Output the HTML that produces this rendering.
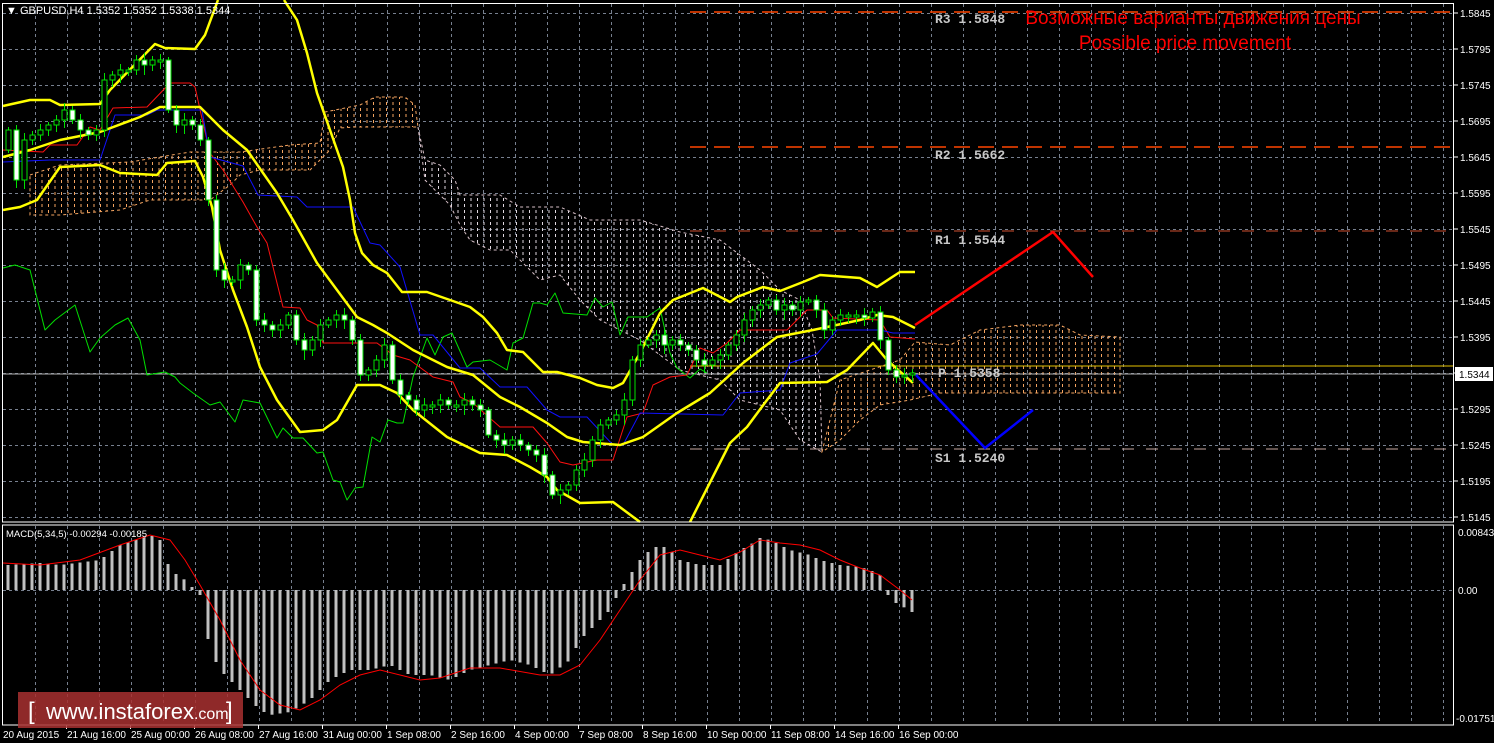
<!DOCTYPE html>
<html><head><meta charset="utf-8"><style>
html,body{margin:0;padding:0;background:#000;width:1494px;height:743px;overflow:hidden}
svg{display:block}
text{font-family:"Liberation Sans",sans-serif}
text.mono{font-family:"Liberation Mono",monospace;font-weight:bold;font-size:13px;fill:#c8c8c8}
</style></head><body>
<svg id="s" width="1494" height="743" viewBox="0 0 1494 743" xmlns="http://www.w3.org/2000/svg">
<defs>
<pattern id="po" width="6.5" height="6" patternUnits="userSpaceOnUse"><line x1="3" y1="0" x2="3" y2="3" stroke="#f4a460" stroke-width="1"/></pattern>
<pattern id="pw" width="6.5" height="6" patternUnits="userSpaceOnUse"><line x1="3" y1="0" x2="3" y2="3" stroke="#e0d8e0" stroke-width="1"/></pattern>
</defs>
<rect width="1494" height="743" fill="#000"/>
<g id="grid" stroke="#77808f" stroke-width="1" stroke-dasharray="3,3"></g>
<polygon fill="url(#po)" stroke="#f4a460" stroke-dasharray="3,3" stroke-width="1" points="30,175 60,165 130,162 190,152 240,152 290,145 320,143 325,112 360,105 375,97 405,97 415,105 418,127 380,127 355,127 340,128 330,150 310,170 260,170 240,175 230,185 210,200 180,200 150,200 120,210 60,215 30,215"/>
<polygon fill="url(#pw)" stroke="#d8c0c8" stroke-dasharray="3,3" stroke-width="1" points="418,127 425,160 440,165 455,180 460,195 500,195 520,207 560,207 590,220 640,220 680,232 720,240 760,270 780,290 800,300 812,330 820,380 822,452 800,440 780,410 740,400 720,380 680,370 640,340 600,320 580,300 560,275 540,280 510,250 490,250 470,240 460,225 450,205 425,180"/>
<polygon fill="url(#po)" stroke="#f4a460" stroke-dasharray="3,3" stroke-width="1" points="822,452 840,380 870,370 900,360 915,342 950,345 980,330 1020,325 1060,325 1080,335 1120,337 1120,393 1020,393 940,393 910,400 880,405 860,420 840,440"/>
<line x1="690" y1="12" x2="1452" y2="12" stroke="#ff4500" stroke-width="1.5" stroke-dasharray="16,8"/>
<line x1="690" y1="147" x2="1452" y2="147" stroke="#ff4500" stroke-width="1.5" stroke-dasharray="16,8"/>
<line x1="690" y1="231" x2="1452" y2="231" stroke="#d05030" stroke-width="1" stroke-dasharray="12,12"/>
<line x1="690" y1="449" x2="1452" y2="449" stroke="#c8a8a0" stroke-width="1" stroke-dasharray="12,12"/>
<line x1="690" y1="366" x2="1454" y2="366" stroke="#e6c200" stroke-width="1"/>
<line x1="3" y1="374" x2="1454" y2="374" stroke="#b0b0b0" stroke-width="1"/>
<text class="mono" x="935" y="23">R3 1.5848</text>
<text class="mono" x="935" y="159">R2 1.5662</text>
<text class="mono" x="935" y="244">R1 1.5544</text>
<text class="mono" x="938" y="377">P 1.5358</text>
<text class="mono" x="935" y="462">S1 1.5240</text>
<g fill="none" stroke-linejoin="round">
<polyline stroke="#00e000" stroke-width="1" points="3,268 15,265 30,270 45,330 55,320 75,305 90,352 100,338 115,325 128,318 140,340 147,375 165,372 175,377 180,383 193,393 210,405 220,402 235,422 243,400 260,403 277,438 283,428 293,438 303,438 317,453 323,452 333,480 340,482 347,500 355,488 363,487 372,437 380,442 388,420 397,423 403,423 413,377 427,338 435,355 443,337 452,333 467,367 473,362 490,360 507,370 513,343 523,338 533,303 540,303 547,305 555,293 563,313 587,315 595,298 603,307 612,302 620,335 628,317 647,317 660,308 670,353 677,368 690,378 700,369 707,373"/>
<polyline stroke="#ff1010" stroke-width="1" points="3,150 43,152 50,145 77,145 90,127 100,130 113,108 147,107 170,83 190,83 195,87 203,123 210,153 223,170 243,202 257,227 267,243 283,307 300,308 307,320 317,325 323,343 377,343 393,355 410,360 433,377 453,382 460,397 473,403 500,427 533,427 547,443 560,462 573,465 597,460 613,460 627,417 643,413 653,385 670,377 687,375 700,348 713,353 727,343 740,330 787,330 807,310 827,310 833,318 880,320 890,337 915,339"/>
<polyline stroke="#1010ff" stroke-width="1" points="3,162 50,160 100,160 115,115 147,115 157,110 202,110 210,157 243,166 258,195 297,197 307,207 353,207 370,243 380,245 400,267 420,335 433,335 460,368 480,368 500,387 527,387 547,410 560,417 587,417 613,445 623,445 640,413 723,415 740,393 780,390 790,363 817,354 837,330 880,330 893,333 915,333"/>
<g stroke="#ffff00" stroke-width="2.5">
<polyline points="3,106 30,100 50,100 60,105 100,104 110,90 155,44 165,48 195,49 205,35 218,0"/>
<polyline points="284,0 297,20 307,53 317,93 330,130 343,167 350,200 355,233 362,253 373,265 387,273 402,292 427,292 450,300 470,307 483,317 497,333 507,350 523,352 543,372 557,372 580,378 597,385 613,388 623,383 640,353 660,313 673,300 703,288 730,302 737,297 763,287 780,291 803,282 820,275 860,278 877,287 900,272 915,272"/>
<polyline points="3,157 30,150 60,140 100,132 140,117 160,107 200,107 223,130 247,150 277,193 293,220 317,263 337,290 357,317 373,325 387,333 413,350 447,367 473,375 500,397 520,407 547,423 567,437 583,442 620,445 643,437 677,413 710,393 743,363 777,337 813,330 860,320 877,315 893,317 915,328"/>
<polyline points="3,210 20,207 37,200 60,167 100,165 120,173 157,175 167,163 195,161 203,177 212,207 220,250 233,290 247,327 260,367 277,400 300,432 323,430 337,420 357,385 380,385 397,393 413,410 447,437 480,453 507,455 530,467 547,477 557,490 580,503 613,502 640,522"/>
<polyline points="690,522 730,443 747,427 767,400 780,383 827,382 847,370 873,343 887,360 913,383"/>
</g>
<polyline stroke="#ff0000" stroke-width="2.5" points="915,325 1053,232 1093,277"/>
<polyline stroke="#0000ff" stroke-width="2.5" points="916,375 985,448 1033,410"/>
</g>
<g id="candles"></g>
<g id="macd"></g>
<polyline fill="none" stroke="#ff0000" stroke-width="1" points="3,563 40,565 80,560 120,545 150,535 170,540 185,560 200,585 220,620 240,660 260,690 280,705 300,710 320,700 340,685 360,675 380,670 420,680 440,678 470,668 500,668 540,675 560,675 580,665 600,640 620,610 640,580 660,555 680,550 700,555 720,560 740,552 760,540 780,543 800,545 820,550 840,560 860,568 880,575 900,590 912,600"/>
<rect x="2.5" y="3.5" width="1451" height="518.5" fill="none" stroke="#fff" stroke-width="1"/>
<rect x="2.5" y="525" width="1451" height="200" fill="none" stroke="#fff" stroke-width="1"/>
<g id="axis" font-size="10" fill="#fff"></g>
<rect x="1455" y="367" width="38" height="14" fill="#fff"/>
<text x="1459" y="378" font-size="10" fill="#000">1.5344</text>
<text x="1458" y="536" font-size="10" fill="#fff">0.00843</text>
<text x="1458" y="594" font-size="10" fill="#fff">0.00</text>
<text x="1456" y="722" font-size="10" fill="#fff">-0.01751</text>
<text x="6" y="14" font-size="11" fill="#fff">▼ GBPUSD,H4  1.5352 1.5352 1.5338 1.5344</text>
<text x="6" y="537" font-size="9.5" fill="#fff">MACD(5,34,5) -0.00294 -0.00185</text>
<text x="1193" y="24" font-size="19" fill="#ff0000" text-anchor="middle">Возможные варианты движения цены</text>
<text x="1185" y="49" font-size="19" fill="#ff0000" text-anchor="middle">Possible price movement</text>
<g id="tl" font-size="10" fill="#fff"></g>
<rect x="18" y="692" width="225" height="36" fill="#a83030" opacity="0.85"/>
<text x="28" y="719" font-size="24" fill="#fff">[</text>
<text x="46" y="719" font-size="22" fill="#fff">www.instaforex<tspan font-size="16">.com</tspan></text>
<text x="226" y="719" font-size="24" fill="#fff">]</text>
</svg>
<script>
(function(){
var NS="http://www.w3.org/2000/svg";
function el(p,t,a){var e=document.createElementNS(NS,t);for(var k in a)e.setAttribute(k,a[k]);p.appendChild(e);return e;}
var g=document.getElementById('grid');
for(var x=35;x<1452;x+=32){el(g,'line',{x1:x+.5,y1:4,x2:x+.5,y2:521});el(g,'line',{x1:x+.5,y1:526,x2:x+.5,y2:724});}
for(var y=13;y<=517;y+=36){el(g,'line',{x1:3,y1:y+.5,x2:1453,y2:y+.5});}
el(g,'line',{x1:3,y1:590.5,x2:1453,y2:590.5});
var ax=document.getElementById('axis');
for(var i=0;i<15;i++){var yy=13+36*i;var v=(1.5845-0.005*i).toFixed(4);
el(ax,'line',{x1:1454,y1:yy,x2:1458,y2:yy,stroke:'#fff'});
if(v!=="1.5345"){var t=el(ax,'text',{x:1460,y:yy+4});t.textContent=v;}}
var tl=document.getElementById('tl');
var labs=["20 Aug 2015","21 Aug 16:00","25 Aug 00:00","26 Aug 08:00","27 Aug 16:00","31 Aug 00:00","1 Sep 08:00","2 Sep 16:00","4 Sep 00:00","7 Sep 08:00","8 Sep 16:00","10 Sep 00:00","11 Sep 08:00","14 Sep 16:00","16 Sep 00:00"];
for(var i=0;i<labs.length;i++){var xx=3+64*i;var t=el(tl,'text',{x:xx,y:738});t.textContent=labs[i];
if(i>0)el(tl,'line',{x1:xx-0.5,y1:725,x2:xx-0.5,y2:729,stroke:'#fff'});}
var c=[130,180,140,135,130,125,120,110,120,130,135,130,80,75,70,70,60,65,60,60,110,125,120,125,140,200,270,280,280,265,270,320,325,330,325,315,340,350,340,325,320,315,320,340,375,370,360,345,380,395,400,410,405,405,400,405,405,400,405,410,435,440,445,440,445,450,455,475,495,490,485,470,460,440,425,420,415,400,360,345,340,335,345,340,345,350,360,365,360,355,345,335,320,310,305,300,310,305,310,302,300,310,330,320,315,315,315,318,312,340,370,377,375,373];
var cg=document.getElementById('candles');var prev=150;
for(var i=0;i<c.length;i++){var cx=8+8*i;var o=prev,cl=c[i];var bt=Math.min(o,cl),bb=Math.max(o,cl);if(bb-bt<2){bb=bt+2;}
var h=(i*7%5)+3;el(cg,'line',{x1:cx+.5,y1:bt-h,x2:cx+.5,y2:bb+h+(i*3%4),stroke:'#00e000','stroke-width':1});
var down=cl>o;el(cg,'rect',{x:cx-2,y:bt,width:5,height:bb-bt,fill:down?'#fff':'#000',stroke:'#00e000','stroke-width':1});prev=cl;}
var m=[[8,565],[40,563],[60,565],[100,560],[120,545],[150,535],[160,540],[170,570],[185,580],[200,595],[210,650],[220,670],[240,690],[260,710],[270,715],[290,712],[310,700],[330,680],[350,670],[370,670],[390,665],[410,675],[430,675],[450,680],[470,670],[490,665],[510,660],[530,665],[550,675],[570,660],[580,640],[600,620],[610,610],[620,590],[630,575],[640,560],[650,550],[660,545],[670,550],[680,560],[700,565],[720,565],[740,550],[750,545],[760,538],[770,540],[790,550],[810,555],[820,560],[840,565],[860,567],[870,570],[880,575],[890,600],[900,605],[912,612]];
function interp(x){for(var j=0;j<m.length-1;j++){if(x>=m[j][0]&&x<=m[j+1][0]){var f=(x-m[j][0])/(m[j+1][0]-m[j][0]);return m[j][1]+f*(m[j+1][1]-m[j][1]);}}return 590;}
var mg=document.getElementById('macd');
for(var x=8;x<=912;x+=8){var v=interp(x);var y0=Math.min(v,590),y1=Math.max(v,590);el(mg,'rect',{x:x-1.5,y:y0,width:3,height:Math.max(1,y1-y0),fill:'#c0c0c0'});}
})();
</script>
</body></html>
